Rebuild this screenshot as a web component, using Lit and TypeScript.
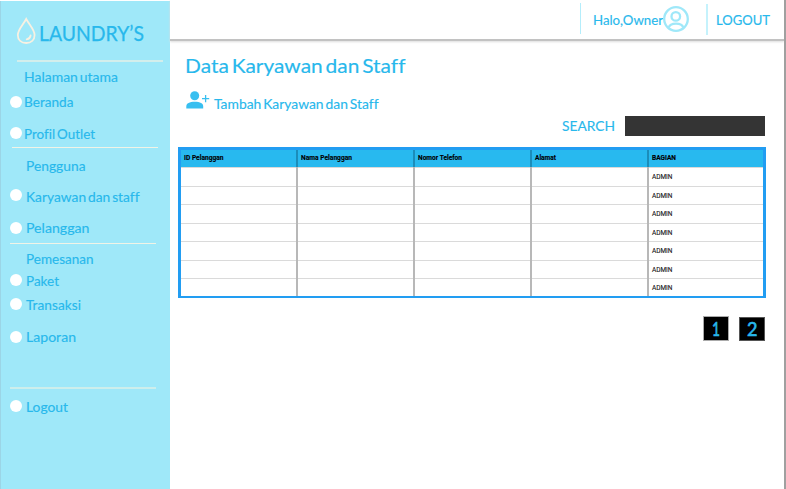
import { LitElement, html, css, svg, nothing } from "lit";
import { customElement, property } from "lit/decorators.js";

/** A single line of text set to an exact measure. */
@customElement("fit-text")
class FitText extends LitElement {
  @property() text = "";
  @property({ type: Number }) width = 50;
  @property({ type: Number }) size = 13.5;
  @property({ type: Number }) height = 20;
  @property({ type: Number }) baseline = 15;
  static styles = css`
    :host { display: block; flex: none; }
    svg { display: block; overflow: visible; }
    text { fill: currentColor; stroke: currentColor; stroke-width: var(--ink, 0.15px); font-variant-ligatures: none; word-spacing: var(--word, -0.12em); }
  `;
  render() {
    return html`<svg width=${this.width} height=${this.height}>
      ${svg`<text x="0" y=${this.baseline} font-size=${this.size} textLength=${this.width} lengthAdjust="spacingAndGlyphs">${this.text}</text>`}
    </svg>`;
  }
}

type Entry = { gap: number; label?: string; width?: number; dot?: number; indent?: number; kind?: string };

const MENU: Entry[] = [
  { gap: 5.4, label: "Halaman utama", width: 94, indent: 24 },
  { gap: 5.1, label: "Beranda", width: 49.5, indent: 24, dot: 4 },
  { gap: 11.5, label: "Profil Outlet", width: 71, indent: 24, dot: 3 },
  { gap: 3, kind: "rule first" },
  { gap: 8, label: "Pengguna", width: 59.5, indent: 26 },
  { gap: 11, label: "Karyawan dan staff", width: 113.5, indent: 26, dot: 2.5 },
  { gap: 11, label: "Pelanggan", width: 63.5, indent: 26, dot: 4 },
  { gap: 5.5, kind: "rule" },
  { gap: 5, label: "Pemesanan", width: 67.5, indent: 26 },
  { gap: 2, label: "Paket", width: 33, indent: 26, dot: 2.5 },
  { gap: 4, label: "Transaksi", width: 55, indent: 26, dot: 2.5 },
  { gap: 11.5, label: "Laporan", width: 50, indent: 26, dot: 4 },
  { gap: 40, kind: "rule soft" },
  { gap: 8, label: "Logout", width: 42, indent: 26, dot: 3.5 },
];

@customElement("side-bar")
class SideBar extends LitElement {
  static styles = css`
    :host { display: block; box-sizing: border-box; width: 169.5px; background: #9fe8f9; border-left: 1px solid #9bd5e6; color: #28b8ec; }
    .brand { display: flex; height: 59px; }
    .drop { width: 20px; height: 28px; margin: 15.5px 0 0 15px; }
    .name { margin: 17.5px 0 0 3.2px; --ink: 0.25px; }
    .top-rule { height: 2px; width: 146px; margin-left: 16px; background: #d3eeec; }
    .row { display: flex; height: 20px; }
    .lead { display: flex; flex: none; box-sizing: border-box; padding-left: 8.6px; }
    .dot { width: 12px; height: 12px; border-radius: 50%; background: #fff; flex: none; }
    .rule { height: 1px; width: 146px; margin-left: 8.5px; background: #f1f3e6; }
    .first { margin-left: 10.8px; }
    .soft { height: 2px; background: #cdeeec; }
  `;
  render() {
    return html`
      <div class="brand">
        <svg class="drop" viewBox="0 0 20 28" fill="none" stroke="#f8f1e2" stroke-width="1.8" stroke-linecap="round">
          <path d="M10.2 2 C7 8 1.8 12.8 1.8 18 C1.8 23 5.3 26 10.2 26 C15.1 26 18.6 23 18.6 18 C18.6 12.8 13.4 8 10.2 2Z" />
          <path d="M14.6 18.4 C14.4 20.5 12.8 22 10.7 22.3" />
        </svg>
        <fit-text class="name" text="LAUNDRY’S" .width=${105} .size=${20.5} .height=${30} .baseline=${22.3}></fit-text>
      </div>
      <div class="top-rule"></div>
      ${MENU.map((m) =>
        m.kind
          ? html`<div class=${m.kind} style="margin-top:${m.gap}px"></div>`
          : html`<div class="row" style="margin-top:${m.gap}px">
              <div class="lead" style="width:${m.indent! - 1}px">
                ${m.dot !== undefined ? html`<span class="dot" style="margin-top:${m.dot}px"></span>` : nothing}
              </div>
              <fit-text .text=${m.label!} .width=${m.width!}></fit-text>
            </div>`
      )}
    `;
  }
}

@customElement("top-bar")
class TopBar extends LitElement {
  static styles = css`
    :host { display: flex; box-sizing: border-box; height: 41px; border-bottom: 2px solid #c2c2c2; box-shadow: 0 1px 2px #ddd; color: #28b8ec; justify-content: flex-end; padding-right: 13.8px; }
    .bar { width: 1.5px; height: 31px; margin-top: 3px; background: #b4edfb; }
    .second { margin: 4px 8.5px 0 17px; width: 2px; background: #c5f2fc; }
    .hello { margin: 9.5px 0 0 11.5px; }
    .user { width: 26px; height: 26px; margin-top: 6px; }
    .out { margin-top: 9.5px; }
  `;
  render() {
    return html`
      <div class="bar"></div>
      <fit-text class="hello" text="Halo,Owner" .width=${70} .size=${13.3}></fit-text>
      <svg class="user" viewBox="0 0 26 26" fill="none" stroke="#9fe8f9" stroke-width="2.3">
        <circle cx="13" cy="13" r="11.8" />
        <circle cx="12.8" cy="10.4" r="4.3" />
        <path d="M5.8 21.5 C6.6 18.6 9 17.7 13 17.7 C17 17.7 19.4 18.6 20.2 21.5" />
      </svg>
      <div class="bar second"></div>
      <fit-text class="out" text="LOGOUT" .width=${54} .size=${13.3}></fit-text>
    `;
  }
}

const COLUMNS = ["ID Pelanggan", "Nama Pelanggan", "Nomor Telefon", "Alamat", "BAGIAN"];
const WIDTHS = [39.5, 51, 44, 21, 24];

@customElement("staff-table")
class StaffTable extends LitElement {
  static styles = css`
    :host { display: block; box-sizing: border-box; width: 588px; height: 151px; border: 3px solid #229df2; border-bottom-width: 2px; font-family: Roboto, sans-serif; color: #111; --ink: 0.1px; --word: 0; }
    .row { display: grid; grid-template-columns: 115px 117px 117px 117px 1fr; height: 18.5px; box-sizing: border-box; border-top: 1px solid #dadada; }
    .row:last-child { height: 18px; }
    .head { height: 17px; border-top: 0; background: #28b9ef; color: #000; font-weight: 700; }
    .cell { box-sizing: border-box; border-left: 2px solid #b8b8b8; padding-left: 3px; margin-top: -1px; }
    .head .cell { margin-top: 0; border-color: #1b8dba; }
    .cell:first-child { border-left: 0; }
  `;
  render() {
    return html`
      <div class="row head">
        ${COLUMNS.map((c, i) => html`<div class="cell"><fit-text .text=${c} .width=${WIDTHS[i]} .size=${6.4} .height=${17} .baseline=${10}></fit-text></div>`)}
      </div>
      ${Array.from({ length: 7 }, () => html`<div class="row">
        ${COLUMNS.map((_, i) => html`<div class="cell">
          ${i === 4 ? html`<fit-text text="ADMIN" .width=${20.5} .size=${6.4} .height=${17} .baseline=${11.7}></fit-text>` : nothing}
        </div>`)}
      </div>`)}
    `;
  }
}

@customElement("app-root")
class AppRoot extends LitElement {
  static styles = css`
    :host { display: flex; box-sizing: border-box; height: 489px; padding-top: 1px; overflow: hidden; background: #fff; border-right: 2px solid #a0a0a0; font-family: Lato, "Open Sans", sans-serif; color: #28b8ec; }
    .main { flex: 1; min-width: 0; display: flex; flex-direction: column; margin-top: -1px; }
    .title { margin: 11px 0 0 15px; }
    .add { display: flex; margin: 8px 0 0 16.5px; height: 22px; }
    .plus { width: 24px; height: 19px; margin-right: 3.5px; }
    .search { display: flex; justify-content: flex-end; height: 20px; margin: 4px 19.5px 0 0; }
    .find { margin: -1px 10px 0 0; }
    .field { width: 140px; height: 20px; background: #343434; }
    .table { margin: 11px 0 0 8.5px; }
    .pager { display: flex; justify-content: flex-end; gap: 10px; margin: 18px 19px 0 0; --ink: 0.6px; }
    .page { width: 26px; height: 25px; box-sizing: border-box; background: #000; border: 1px solid #aaa; display: flex; justify-content: center; }
    .page:last-child { height: 24px; margin-top: 1px; border-color: #555; }
  `;
  render() {
    return html`
      <side-bar></side-bar>
      <main class="main">
        <top-bar></top-bar>
        <fit-text class="title" text="Data Karyawan dan Staff" .width=${220.5} .size=${20} .height=${30} .baseline=${21.3}></fit-text>
        <div class="add">
          <svg class="plus" viewBox="0 0 24 19" fill="#38bff0">
            <circle cx="8.7" cy="5.8" r="4.5" />
            <path d="M0.3 18.4 V16.5 C0.3 13.3 3.5 11.8 8.8 11.8 C14.1 11.8 17.2 13.3 17.2 16.5 V18.4Z" />
            <path d="M16 8.6 H23.2 M19.6 5 V12.2" stroke="#38bff0" stroke-width="1.3" />
          </svg>
          <fit-text text="Tambah Karyawan dan Staff" .width=${164.5} .size=${13.6} .height=${22} .baseline=${19}></fit-text>
        </div>
        <div class="search">
          <fit-text class="find" text="SEARCH" .width=${53} .size=${14} .height=${20} .baseline=${16}></fit-text>
          <div class="field"></div>
        </div>
        <staff-table class="table"></staff-table>
        <div class="pager">
          <div class="page"><fit-text text="1" .width=${8} .size=${18.5} .height=${23} .baseline=${19}></fit-text></div>
          <div class="page"><fit-text text="2" .width=${10.5} .size=${18.5} .height=${22} .baseline=${18}></fit-text></div>
        </div>
      </main>
    `;
  }
}
